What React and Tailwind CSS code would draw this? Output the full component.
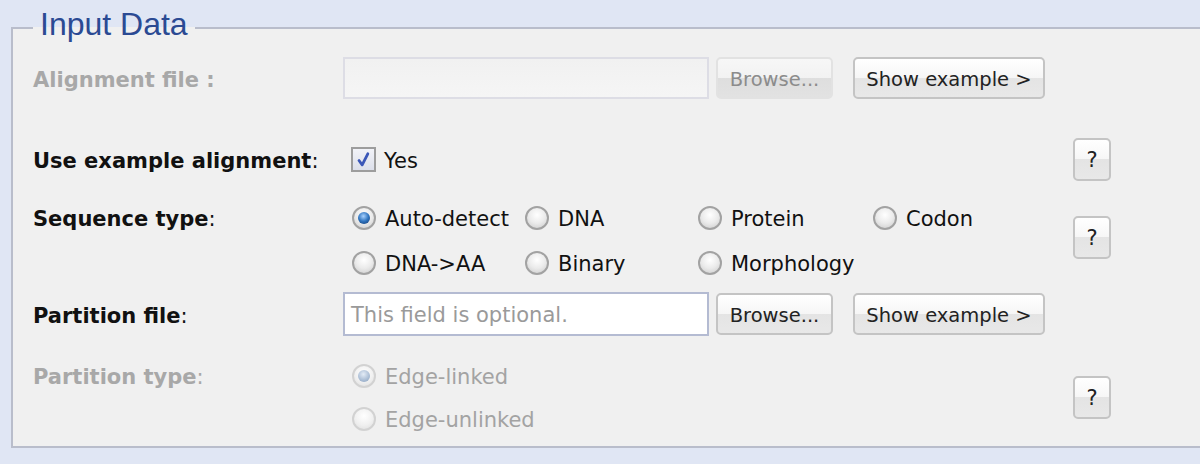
import React from "react";

const F = "font-['DejaVu_Sans',Verdana,sans-serif]";

function Radio({ checked, disabled }) {
  const outer = disabled
    ? "border-[#d2d2d2] bg-[radial-gradient(circle_at_50%_35%,#ffffff_0%,#f0f0f0_55%,#dcdcdc_100%)]"
    : "border-[#a2a2a2] bg-[radial-gradient(circle_at_50%_35%,#ffffff_0%,#ebebeb_50%,#c9c9c9_100%)]";
  const dot = disabled
    ? "bg-[radial-gradient(circle_at_45%_35%,#e4ecf6_0%,#a9bcd4_60%,#8aa0bc_100%)]"
    : "bg-[radial-gradient(circle_at_45%_35%,#a9d2ff_0%,#2f74bf_50%,#12356a_100%)]";
  return (
    <span
      className={`flex h-[24px] w-[24px] shrink-0 items-center justify-center rounded-full border-2 ${outer}`}
    >
      {checked ? <span className={`h-[12px] w-[12px] rounded-full ${dot}`} /> : null}
    </span>
  );
}

function RadioItem({ label, checked, disabled, w }) {
  return (
    <div className={`flex items-center gap-[9px] ${w}`}>
      <Radio checked={checked} disabled={disabled} />
      <span className={`pt-[5px] ${disabled ? "text-[#a3a3a3]" : "text-[#111111]"}`}>{label}</span>
    </div>
  );
}

function Btn({ children, w, h, disabled, big }) {
  const look = disabled
    ? "border-[#e2e2e2] text-[#8c8c8c] bg-[linear-gradient(to_bottom,#f7f7f7_0%,#f2f2f2_50%,#dedede_50%,#e2e2e2_100%)]"
    : "border-[#c4c4c4] text-[#222222] bg-[linear-gradient(to_bottom,#ffffff_0%,#f6f6f6_50%,#e4e4e4_50%,#e8e8e8_100%)]";
  return (
    <div
      className={`flex shrink-0 items-center justify-center rounded-[5px] border-2 pt-[3px] ${big ? "text-[21px]" : "text-[19.5px]"} ${look} ${w} ${h}`}
    >
      {children}
    </div>
  );
}

function Label({ text, disabled }) {
  return (
    <div
      className={`flex w-[310px] shrink-0 items-center pt-[5px] ${disabled ? "text-[#a8a8a8]" : "text-[#111111]"}`}
    >
      <span className="font-bold">{text}</span>
      <span>:</span>
    </div>
  );
}

export default function App() {
  return (
    <div className={`h-[464px] w-[1200px] overflow-hidden bg-[#e0e6f4] pl-[11px] pt-[8px] ${F} text-[21px]`}>
      <fieldset className="h-[440px] w-[1230px] border-2 border-[#b9bdcb] bg-[#f0f0f0] pl-[20px]">
        <legend className="px-[7px] pb-[7px] font-['Liberation_Sans',Arial,sans-serif] text-[32px] leading-[32px] text-[#2b4a93]">
          Input Data
        </legend>

        {/* Row 1 */}
        <div className="mt-[10px] flex h-[42px]">
          <div className="flex w-[310px] shrink-0 items-center pt-[5px] text-[#a8a8a8]">
            <span className="font-bold">Alignment file :</span>
          </div>
          <div className="flex w-[730px] items-center">
            <div className="h-[42px] w-[366px] border-2 border-[#dddde5] bg-[linear-gradient(to_bottom,#f1f1f1,#f5f5f5)]" />
            <div className="ml-[7px]">
              <Btn w="w-[117px]" h="h-[42px]" disabled>
                Browse...
              </Btn>
            </div>
            <div className="ml-[20px]">
              <Btn w="w-[192px]" h="h-[42px]">
                Show example &gt;
              </Btn>
            </div>
          </div>
        </div>

        {/* Row 2 */}
        <div className="mt-[38px] flex h-[44px]">
          <Label text="Use example alignment" />
          <div className="flex w-[730px] items-center pl-[8px]">
            <span className="flex h-[25px] w-[25px] items-center justify-center border-2 border-[#9d9d9d] bg-[linear-gradient(to_bottom,#f2f3f8,#dcdfea)]">
              <svg width="17" height="17" viewBox="0 0 17 17">
                <path d="M4 9.5 L7.2 13.8 L12.8 2.8" fill="none" stroke="#3b57b8" strokeWidth="2.8" strokeLinecap="round" strokeLinejoin="round" />
              </svg>
            </span>
            <span className="ml-[8px] pt-[5px] text-[#111111]">Yes</span>
          </div>
          <div className="flex items-center">
            <Btn w="w-[38px]" h="h-[43px]" big>?</Btn>
          </div>
        </div>

        {/* Row 3 */}
        <div className="mt-[14px] flex">
          <div className="flex h-[45px] w-[310px] shrink-0 items-center pt-[5px] text-[#111111]">
            <span className="font-bold">Sequence type</span>
            <span>:</span>
          </div>
          <div className="flex w-[730px] flex-col pl-[9px]">
            <div className="flex h-[45px] items-center">
              <RadioItem label="Auto-detect" checked w="w-[173px]" />
              <RadioItem label="DNA" w="w-[173px]" />
              <RadioItem label="Protein" w="w-[175px]" />
              <RadioItem label="Codon" w="w-[150px]" />
            </div>
            <div className="flex h-[45px] items-center">
              <RadioItem label="DNA->AA" w="w-[173px]" />
              <RadioItem label="Binary" w="w-[173px]" />
              <RadioItem label="Morphology" w="w-[175px]" />
            </div>
          </div>
          <div className="mt-[21px] self-start">
            <Btn w="w-[38px]" h="h-[43px]" big>?</Btn>
          </div>
        </div>

        {/* Row 4 */}
        <div className="mt-[7px] flex h-[44px]">
          <Label text="Partition file" />
          <div className="flex w-[730px] items-center">
            <div className="flex h-[44px] w-[366px] items-center border-2 border-[#b4bbd2] bg-white pl-[6px] pt-[4px] text-[#9a9a9a]">
              This field is optional.
            </div>
            <div className="ml-[7px]">
              <Btn w="w-[117px]" h="h-[42px]">Browse...</Btn>
            </div>
            <div className="ml-[20px]">
              <Btn w="w-[192px]" h="h-[42px]">Show example &gt;</Btn>
            </div>
          </div>
        </div>

        {/* Row 5 */}
        <div className="mt-[18px] flex">
          <div className="flex h-[43px] w-[310px] shrink-0 items-center pt-[5px] text-[#a8a8a8]">
            <span className="font-bold">Partition type</span>
            <span>:</span>
          </div>
          <div className="flex w-[730px] flex-col pl-[9px]">
            <div className="flex h-[43px] items-center">
              <RadioItem label="Edge-linked" checked disabled w="w-[200px]" />
            </div>
            <div className="flex h-[43px] items-center">
              <RadioItem label="Edge-unlinked" disabled w="w-[200px]" />
            </div>
          </div>
          <div className="flex items-center">
            <Btn w="w-[38px]" h="h-[43px]" big>?</Btn>
          </div>
        </div>
      </fieldset>
    </div>
  );
}
